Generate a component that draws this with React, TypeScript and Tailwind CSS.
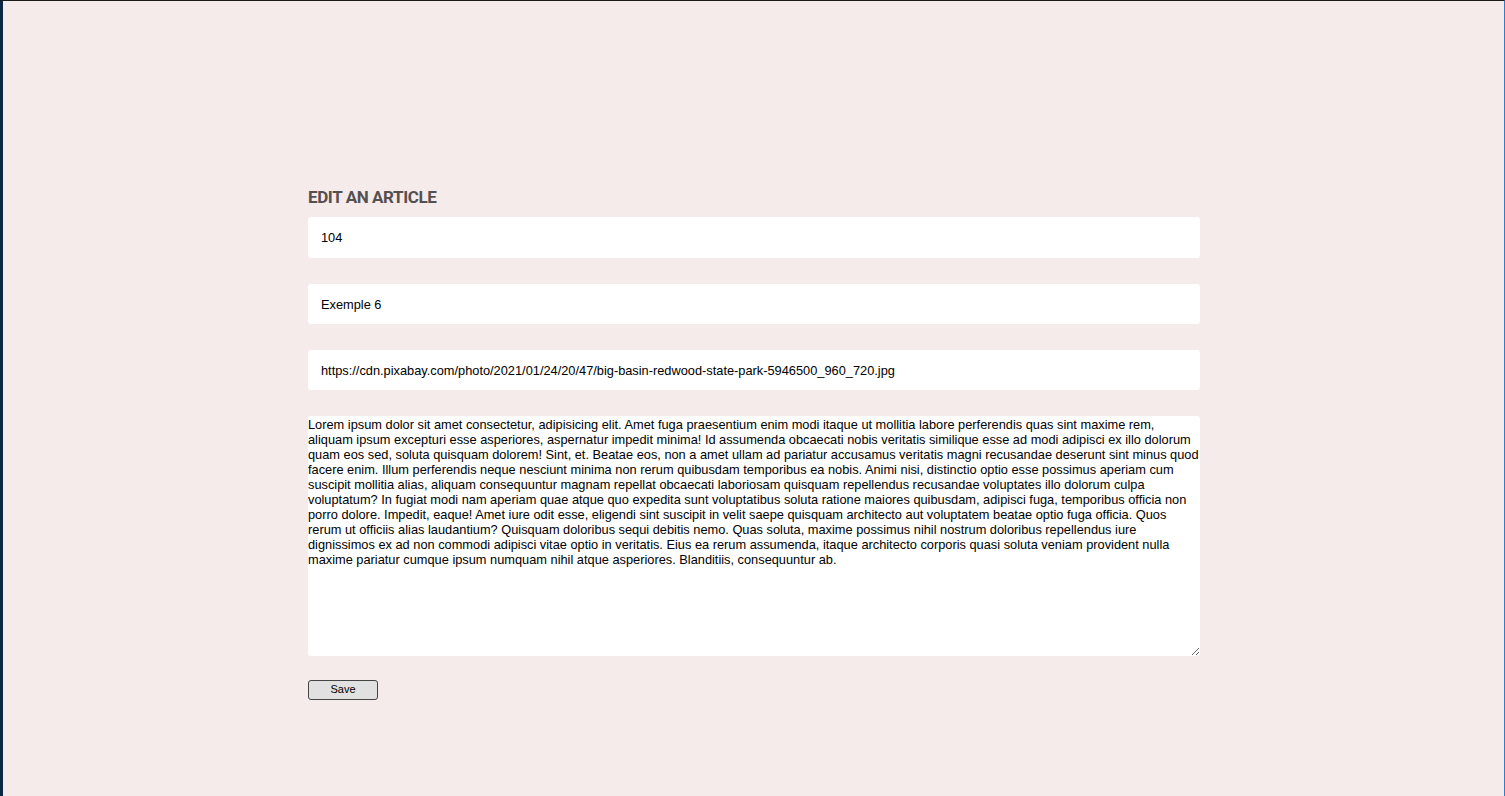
import React from "react";

const LOREM =
  "Lorem ipsum dolor sit amet consectetur, adipisicing elit. Amet fuga praesentium enim modi itaque ut mollitia labore perferendis quas sint maxime rem, aliquam ipsum excepturi esse asperiores, aspernatur impedit minima! Id assumenda obcaecati nobis veritatis similique esse ad modi adipisci ex illo dolorum quam eos sed, soluta quisquam dolorem! Sint, et. Beatae eos, non a amet ullam ad pariatur accusamus veritatis magni recusandae deserunt sint minus quod facere enim. Illum perferendis neque nesciunt minima non rerum quibusdam temporibus ea nobis. Animi nisi, distinctio optio esse possimus aperiam cum suscipit mollitia alias, aliquam consequuntur magnam repellat obcaecati laboriosam quisquam repellendus recusandae voluptates illo dolorum culpa voluptatum? In fugiat modi nam aperiam quae atque quo expedita sunt voluptatibus soluta ratione maiores quibusdam, adipisci fuga, temporibus officia non porro dolore. Impedit, eaque! Amet iure odit esse, eligendi sint suscipit in velit saepe quisquam architecto aut voluptatem beatae optio fuga officia. Quos rerum ut officiis alias laudantium? Quisquam doloribus sequi debitis nemo. Quas soluta, maxime possimus nihil nostrum doloribus repellendus iure dignissimos ex ad non commodi adipisci vitae optio in veritatis. Eius ea rerum assumenda, itaque architecto corporis quasi soluta veniam provident nulla maxime pariatur cumque ipsum numquam nihil atque asperiores. Blanditiis, consequuntur ab.";

export default function App() {
  const inputCls =
    "w-full h-[40px] bg-white rounded-[3px] px-[13px] text-[12.8px] text-black outline-none border-0 font-['Liberation_Sans',Arial,sans-serif]";
  return (
    <div className="flex h-[796px] w-full bg-[#f5ebeb] border-t border-[#1a1a1a] border-r border-r-[#2a7fd0] overflow-hidden">
      <div className="w-[3px] h-full bg-[#0d2744] shrink-0" />
      <div className="flex-1 flex flex-col pl-[305px] pt-[186px]">
        <div className="w-[892px] flex flex-col">
          <h1 className="font-['Roboto',sans-serif] font-bold text-[17px] tracking-[-0.4px] text-[#555050] leading-[20px] mb-[10px] uppercase">
            Edit an article
          </h1>
          <form className="flex flex-col gap-[26px]" onSubmit={(e) => e.preventDefault()}>
            <input className={inputCls + " h-[41px]"} defaultValue="104" />
            <input className={inputCls} defaultValue="Exemple 6" />
            <input
              className={inputCls}
              defaultValue="https://cdn.pixabay.com/photo/2021/01/24/20/47/big-basin-redwood-state-park-5946500_960_720.jpg"
            />
            <textarea
              className="w-full h-[240px] bg-white rounded-[3px] p-0 pt-[1px] text-[12.8px] leading-[15px] text-black outline-none border-0 font-['Liberation_Sans',Arial,sans-serif] resize"
              defaultValue={LOREM}
            />
          </form>
          <div className="mt-[19px]">
            <button
              type="button"
              className="w-[70px] h-[20px] bg-[#e1e1e1] border border-[#444] rounded-[3px] text-[11px] text-black font-['Liberation_Sans',Arial,sans-serif] leading-none"
            >
              Save
            </button>
          </div>
        </div>
      </div>
    </div>
  );
}
